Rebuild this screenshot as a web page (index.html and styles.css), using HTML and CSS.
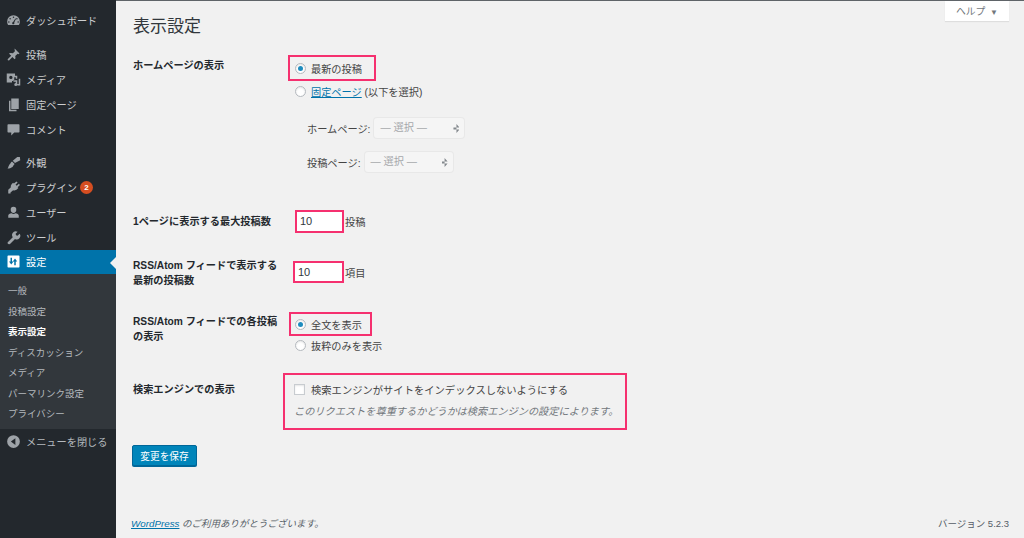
FILE: index.html
```html
<!DOCTYPE html>
<html lang="ja">
<head>
    <meta charset="UTF-8">
    <meta name="viewport" content="width=device-width, initial-scale=1.0">
    <title>表示設定</title>
    <link rel="stylesheet" href="styles.css">
</head>
<body>

    <nav class="sidebar">
        <ul class="menu menu-first">
            <li class="menu-item"><svg class="menu-icon" viewBox="0 0 20 20"><path fill-rule="evenodd" d="M10 3a8.500 8.500 0 0 0-8.500 8.500c0 1.800.5 3.200 1.300 4.500h14.400c.8-1.300 1.300-2.700 1.300-4.500A8.500 8.500 0 0 0 10 3zm0 1.500a1 1 0 1 1 0 2 1 1 0 0 1 0-2zM5.500 6.500a1 1 0 1 1 0 2 1 1 0 0 1 0-2zm9 0a1 1 0 1 1 0 2 1 1 0 0 1 0-2zM3.800 11a1 1 0 1 1 0 2 1 1 0 0 1 0-2zm12.400 0a1 1 0 1 1 0 2 1 1 0 0 1 0-2zm-3.700-3.800.9.500-2.400 5.100a1.500 1.500 0 1 1-1.500-.7z"/></svg>ダッシュボード</li>
        </ul>
        <ul class="menu">
            <li class="menu-item"><svg class="menu-icon" viewBox="0 0 20 20"><path d="M11.500 2 18 8.500l-1.500 1-1-.6-3.200 3 .4 3.100-1.200 1.200-3-3-4.500 4.800-1.500-.4-.3-1.400 4.700-4.700-3-3L6 8l3.200.4 3-3.100-.7-1.100z"/></svg>投稿</li>
            <li class="menu-item"><svg class="menu-icon" viewBox="0 0 20 20"><path fill-rule="evenodd" d="M1 2h11v3h3v4h-2V7h-2v5H8v2H1zm5.500 3a2.200 2.200 0 1 0 0 4.400 2.200 2.200 0 0 0 0-4.400zM17 9h2v9h-4v-2h2zm-7 2h5v5.500a2 2 0 1 1-2-2v-1.500h-3z"/></svg>メディア</li>
            <li class="menu-item"><svg class="menu-icon" viewBox="0 0 20 20"><path d="M7 2h10v14H7zM4 5h2v12h8v2H4z"/></svg>固定ページ</li>
            <li class="menu-item"><svg class="menu-icon" viewBox="0 0 20 20"><path d="M3 3h14a1 1 0 0 1 1 1v9a1 1 0 0 1-1 1h-6l-4 4v-4H3a1 1 0 0 1-1-1V4a1 1 0 0 1 1-1z"/></svg>コメント</li>
        </ul>
        <ul class="menu">
            <li class="menu-item"><svg class="menu-icon" viewBox="0 0 20 20"><path d="M18.500 2.500 19 7l-7 3.500-3-3 6-5zM8 8.500l3.500 3.500-1.500 1.500c-.5 2-2.500 4-8 4.500 1.500-1.500 1-3 2.300-4.700C5.500 11.500 6.500 11 6.500 10z"/></svg>外観</li>
            <li class="menu-item"><svg class="menu-icon" viewBox="0 0 20 20"><path d="M14 2l1.500 1.300-2.800 3 1.600 1.500 2.900-2.900L18.500 6.500l-3 3 1 1-1.500 1.500c-2 2-4 2.200-5.500 1.500L6 16.500V18H3v-5l3.500-3.200c-.4-1.500 0-3.300 1.500-4.800l1.500-1.500 1 1z"/></svg>プラグイン<span class="badge">2</span></li>
            <li class="menu-item"><svg class="menu-icon" viewBox="0 0 20 20"><path d="M10 2.500a3.700 3.700 0 0 1 3.700 4c0 2.200-1.500 4-3.700 4s-3.700-1.800-3.700-4a3.700 3.700 0 0 1 3.700-4zM3 17v-3c0-1.500 2-2.500 4.500-3 .8.700 1.600 1 2.500 1s1.700-.3 2.500-1c2.500.5 4.500 1.500 4.500 3v3z"/></svg>ユーザー</li>
            <li class="menu-item"><svg class="menu-icon" viewBox="0 0 20 20"><path d="M14 2a4.500 4.500 0 0 1 1.500.3L12.800 5l.6 2 2 .6 2.700-2.700A4.800 4.800 0 0 1 12 12l-6 6a2 2 0 0 1-3.500-2l.5-.5 6-6A4.800 4.800 0 0 1 14 2z"/></svg>ツール</li>
            <li class="menu-item is-current"><svg class="menu-icon" viewBox="0 0 20 20"><path fill-rule="evenodd" d="M3 2h14a1 1 0 0 1 1 1v14a1 1 0 0 1-1 1H3a1 1 0 0 1-1-1V3a1 1 0 0 1 1-1zm3 3v5H4l3 4 3-4H8V5zm7 10v-5h2l-3-4-3 4h2v5z"/></svg>設定</li>
        </ul>
        <ul class="submenu">
            <li>一般</li>
            <li>投稿設定</li>
            <li class="is-current">表示設定</li>
            <li>ディスカッション</li>
            <li>メディア</li>
            <li>パーマリンク設定</li>
            <li>プライバシー</li>
        </ul>
        <div class="collapse"><svg class="menu-icon" viewBox="0 0 20 20"><path d="M10 1.500a8.500 8.500 0 1 1 0 17 8.500 8.500 0 0 1 0-17zM12.500 5.500 6.500 10l6 4.500z" fill-rule="evenodd"/></svg>メニューを閉じる</div>
    </nav>

    <main class="content">
        <button class="help-tab">ヘルプ <span class="help-arrow">▼</span></button>
        <h1>表示設定</h1>

        <div class="form-row row-front">
            <div class="row-label">ホームページの表示</div>
            <div class="row-field">
                <div class="mark mark-latest"><label class="option"><span class="radio checked"></span>最新の投稿</label></div>
                <label class="option option-page"><span class="radio"></span><a href="#">固定ページ</a>&nbsp;(以下を選択)</label>
                <div class="page-select select-home">ホームページ: <span class="fake-select">— 選択 —<span class="updown"></span></span></div>
                <div class="page-select select-posts">投稿ページ: <span class="fake-select short">— 選択 —<span class="updown"></span></span></div>
            </div>
        </div>

        <div class="form-row row-perpage">
            <div class="row-label">1ページに表示する最大投稿数</div>
            <div class="row-field number-field">
                <span class="mark mark-number"><span class="number-input">10</span></span>投稿
            </div>
        </div>

        <div class="form-row row-rss">
            <div class="row-label">RSS/Atom フィードで表示する最新の投稿数</div>
            <div class="row-field number-field">
                <span class="mark mark-number wide"><span class="number-input">10</span></span>項目
            </div>
        </div>

        <div class="form-row row-excerpt">
            <div class="row-label">RSS/Atom フィードでの各投稿の表示</div>
            <div class="row-field">
                <div class="mark mark-full"><label class="option"><span class="radio checked"></span>全文を表示</label></div>
                <label class="option option-excerpt"><span class="radio"></span>抜粋のみを表示</label>
            </div>
        </div>

        <div class="form-row row-search">
            <div class="row-label">検索エンジンでの表示</div>
            <div class="row-field">
                <div class="mark mark-search">
                    <label class="option"><span class="checkbox"></span>検索エンジンがサイトをインデックスしないようにする</label>
                    <p class="description">このリクエストを尊重するかどうかは検索エンジンの設定によります。</p>
                </div>
            </div>
        </div>

        <button class="save-button">変更を保存</button>

        <footer class="page-footer">
            <span class="thanks"><a href="#">WordPress</a> のご利用ありがとうございます。</span>
            <span>バージョン 5.2.3</span>
        </footer>
    </main>

</body>
</html>
```

FILE: styles.css
```css
/* 全体 */
* {
    box-sizing: border-box;
}

html, body {
    height: 100%;
}

body {
    margin: 0;
    display: flex;
    overflow: hidden;
    background: #f1f1f1;
    color: #444;
    font-family: "Liberation Sans", "Noto Sans CJK JP", sans-serif;
    font-size: 10.2px;
}

a {
    color: #0073aa;
}

ul {
    list-style: none;
    margin: 0;
    padding: 0;
}

/* サイドバー */
.sidebar {
    flex: 0 0 116px;
    height: 100%;
    padding-top: 8.5px;
    background: #23282d;
    color: #ccced0;
}

.menu {
    margin-bottom: 8px;
}

.menu-first {
    margin-bottom: 9px;
}

.menu-item {
    position: relative;
    display: flex;
    align-items: center;
    height: 24.9px;
    padding-left: 6px;
}

.menu-icon {
    flex: none;
    width: 15px;
    height: 15px;
    margin-right: 5px;
    fill: #9ea3a8;
}

.menu-item.is-current {
    background: #0073aa;
    color: #fff;
}

.menu-item.is-current .menu-icon {
    fill: #fff;
}

.menu-item.is-current::after {
    content: "";
    position: absolute;
    right: 0;
    top: 7px;
    border: 6px solid transparent;
    border-right-color: #f1f1f1;
    border-left-width: 0;
}

.badge {
    width: 13px;
    height: 13px;
    margin-left: 3px;
    border-radius: 50%;
    background: #d54e21;
    color: #fff;
    font-size: 8px;
    font-weight: bold;
    line-height: 13px;
    text-align: center;
}

.submenu {
    margin-top: -8px;
    padding: 7px 0 4px;
    background: #32373c;
    color: #b4b9be;
    font-size: 9.5px;
}

.submenu li {
    height: 20.5px;
    padding-left: 8px;
    line-height: 20.5px;
}

.submenu .is-current {
    color: #fff;
    font-weight: bold;
}

.collapse {
    display: flex;
    align-items: center;
    height: 26px;
    padding-left: 6px;
    color: #b4b9be;
}

/* メイン */
.content {
    position: relative;
    flex: 1;
    display: flex;
    flex-direction: column;
    height: 100%;
    padding: 16px 15px 8px 17px;
    border-top: 1px solid #5f6468;
}

h1 {
    margin: 0 0 18px;
    color: #32373c;
    font-size: 17px;
    font-weight: normal;
    line-height: 20px;
}

.help-tab {
    position: absolute;
    top: 0;
    right: 15px;
    width: 64px;
    height: 20px;
    padding: 0;
    border: 0;
    background: #fff;
    box-shadow: 0 1px 1px rgba(0, 0, 0, 0.08);
    color: #72777c;
    font: inherit;
    font-size: 9.8px;
}

.help-arrow {
    margin-left: 2px;
    font-size: 8px;
}

/* フォーム */
.form-row {
    display: grid;
    grid-template-columns: 150px 1fr;
    column-gap: 5px;
}

.row-label {
    color: #23282d;
    font-weight: bold;
    line-height: 15px;
}

.row-front .row-label {
    padding-top: 3px;
}

.row-perpage {
    margin-top: 38px;
}

.row-perpage .row-label {
    padding-top: 4px;
}

.row-rss {
    margin-top: 25px;
}

.row-excerpt {
    margin-top: 24px;
}

.row-excerpt .row-label {
    padding-top: 2px;
}

.row-search {
    margin-top: 18px;
}

.row-search .row-label {
    padding-top: 9px;
}

.mark {
    border: 2px solid #f5306f;
}

.option {
    display: flex;
    align-items: center;
    height: 20px;
}

.radio, .checkbox {
    flex: none;
    width: 11px;
    height: 11px;
    margin-right: 5px;
    border: 1px solid #b4b9be;
    background: #fff;
    box-shadow: inset 0 1px 2px rgba(0, 0, 0, 0.1);
}

.radio {
    display: flex;
    align-items: center;
    justify-content: center;
    border-radius: 50%;
}

.radio.checked::before {
    content: "";
    width: 5px;
    height: 5px;
    border-radius: 50%;
    background: #1e8cbe;
}

.mark-latest {
    width: 88px;
    height: 26px;
    padding: 1px 0 0 5px;
}

.option-page {
    margin-left: 7px;
}

.page-select {
    display: flex;
    align-items: center;
    height: 20px;
    margin-left: 19px;
}

.select-home {
    margin-top: 17px;
}

.select-posts {
    margin-top: 14px;
}

.fake-select {
    position: relative;
    width: 90px;
    height: 20px;
    margin-left: 4px;
    padding-left: 6px;
    border-radius: 3px;
    background: #f5f5f5;
    box-shadow: 0 0 0 1px #e8e8e8;
    color: #a5a8ab;
    line-height: 20px;
}

.fake-select.short {
    width: 88px;
}

.updown {
    position: absolute;
    right: 5px;
    top: 6px;
    width: 6px;
    height: 9px;
    background: #82878c;
    clip-path: polygon(50% 0, 100% 40%, 0 40%, 0 60%, 100% 60%, 50% 100%);
}

.number-field {
    display: flex;
    align-items: center;
    align-self: start;
}

.mark-number {
    display: block;
    width: 49px;
    height: 23px;
    margin: 0 1px 0 7px;
}

.mark-number.wide {
    width: 51px;
    height: 22px;
    margin-left: 5px;
}

.number-input {
    display: block;
    height: 100%;
    padding-left: 3px;
    background: #fff;
    color: #32373c;
    font-size: 11px;
    line-height: 19px;
}

.row-rss .row-field {
    padding-top: 3px;
}

.mark-full {
    width: 83px;
    height: 24px;
    margin-left: 1px;
    padding: 0 0 0 4px;
}

.option-excerpt {
    margin: -1px 0 0 7px;
}

.mark-search {
    width: 344px;
    height: 57px;
    margin-left: -5px;
    padding: 4px 0 0 9px;
    font-size: 10.3px;
}

.mark-search .checkbox {
    margin-right: 6px;
    border-color: #c8ccd0;
}

.description {
    margin: 3px 0 0;
    color: #72777c;
    font-size: 10.2px;
    font-style: italic;
    line-height: 20px;
    white-space: nowrap;
}

/* ボタン */
.save-button {
    align-self: flex-start;
    width: 65px;
    height: 21px;
    margin: 15px 0 0 -1px;
    padding: 0;
    border: 1px solid #006799;
    border-radius: 2px;
    background: #0085ba;
    box-shadow: 0 1px 0 #006799;
    color: #fff;
    font: inherit;
    font-size: 9.7px;
}

.page-footer {
    display: flex;
    justify-content: space-between;
    margin-top: auto;
    margin-left: -2px;
    color: #555d66;
    font-size: 9.5px;
}

.thanks {
    font-style: italic;
}

.thanks a {
    font-size: 9.8px;
}
```
